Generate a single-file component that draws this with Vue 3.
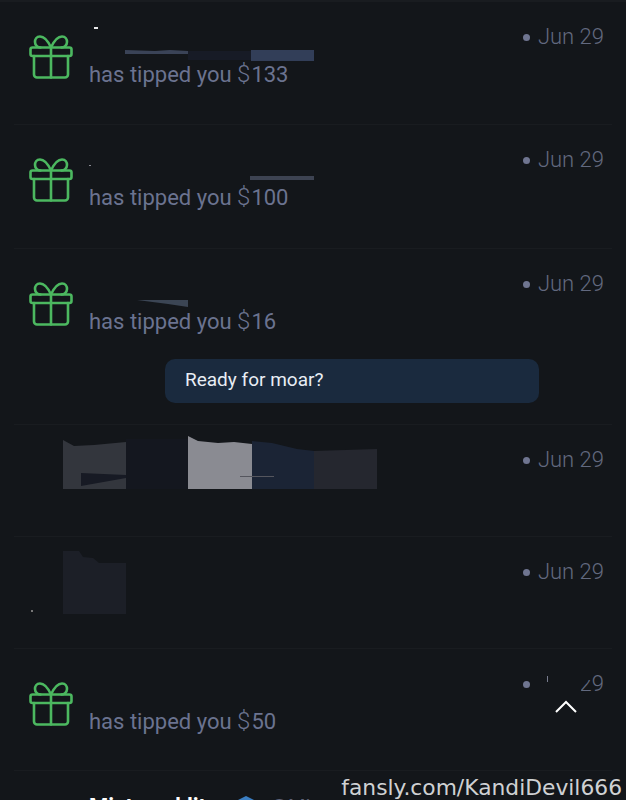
<script setup>
// 通知列表
const rows = [
  { id: 1, amount: '133', height: 123 },
  { id: 2, amount: '100', height: 124 },
  { id: 3, amount: '16', height: 176, reply: 'Ready for moar?' },
  { id: 4, height: 112 },
  { id: 5, height: 112 },
  { id: 6, amount: '50', height: 122 },
]
</script>

<template>
  <div class="page">
    <div class="top-line"></div>
    <div v-for="row in rows" :key="row.id" class="row" :style="{ height: row.height + 'px' }">
      <div class="row-main">
        <div class="icon-col">
          <svg v-if="row.amount" class="gift" viewBox="0 0 44 44" fill="none" stroke="#4cb860" stroke-width="2.6" stroke-linecap="round" stroke-linejoin="round">
            <rect x="1.5" y="12.5" width="41" height="8.5" rx="2" />
            <path d="M5 21v18.500a3 3 0 0 0 3 3h28a3 3 0 0 0 3-3V21" />
            <path d="M22 12.500v30" />
            <path d="M22 12.500C19 6 15 1.500 11 1.500c-3.500 0-5 3-5 5.500 0 3 2.500 5.500 5.500 5.500" />
            <path d="M22 12.500C25 6 29 1.500 33 1.500c3.500 0 5 3 5 5.500 0 3-2.500 5.500-5.500 5.500" />
          </svg>
        </div>
        <div v-if="row.amount" class="tip-text">has tipped you <span class="dollar">$</span>{{ row.amount }}</div>
        <div class="date">
          <span class="dot"></span>
          <span>Jun 29</span>
        </div>
      </div>
      <div v-if="row.reply" class="reply-wrap">
        <div class="reply">{{ row.reply }}</div>
      </div>

      <!-- 打码区域 -->
      <svg v-if="row.id === 1" class="patches" width="400" height="70" viewBox="0 0 400 70">
        <path d="M94 25h4v2h-4z" fill="#e8e8ea" />
        <path d="M125 48l30 1 15-1 18 1v3h-63z" fill="#3a4357" />
        <path d="M188 49h63v9h-63z" fill="#171b26" />
        <path d="M251 48h63v11h-63z" fill="#323e58" />
      </svg>
      <svg v-if="row.id === 2" class="patches" width="400" height="70" viewBox="0 0 400 70">
        <path d="M89 40h2v1h-2z" fill="#8a8a92" />
        <path d="M250 51h64v4h-64z" fill="#3d4352" />
      </svg>
      <svg v-if="row.id === 3" class="patches" width="400" height="70" viewBox="0 0 400 70">
        <path d="M137 51l51 0v7l-20-3z" fill="#3b4554" />
      </svg>
      <svg v-if="row.id === 4" class="patches" width="400" height="80" viewBox="0 0 400 80">
        <path d="M63 15l11 6 20-1 32-3v47H63z" fill="#33363d" />
        <path d="M81 48l45 2v3l-45 8z" fill="#171a24" />
        <path d="M126 14h62v50h-62z" fill="#14171f" />
        <path d="M188 11l10 5 20 2 16-1 18 2v45h-64z" fill="#8a8b92" />
        <path d="M252 16l20 2 25 6 17 2v38h-62z" fill="#1b2435" />
        <path d="M314 26l63-2v40h-63z" fill="#25272f" />
        <path d="M240 51h34v1h-34z" fill="#55565e" />
      </svg>
      <svg v-if="row.id === 5" class="patches" width="400" height="90" viewBox="0 0 400 90">
        <path d="M63 14h16l4 6 10 1 6 5h27v51H63z" fill="#1c1f27" />
        <path d="M31 73h2v2h-2z" fill="#777" />
      </svg>
      <template v-if="row.id === 6">
        <svg class="patches" width="626" height="60" viewBox="0 0 626 60">
          <path d="M533 20h48v28h-48zM581 20h10v11h-10z" fill="#13161a" />
          <path d="M547 27h1v6h-1z" fill="#777b8d" />
        </svg>
        <svg class="scroll-up" width="24" height="18" viewBox="0 0 24 18" fill="none" stroke="#fff" stroke-width="2">
          <path d="M2 15L12 5l10 10" />
        </svg>
      </template>
    </div>

    <div class="row last-row">
      <span class="name">Mistressklit</span>
      <svg class="badge" width="18" height="18" viewBox="0 0 18 18"><path d="M9 0l8 4v8l-8 6-8-6V4z" fill="#3b7fc4" /></svg>
      <span class="handle">@Mist</span>
    </div>

    <div class="watermark">fansly.com/KandiDevil666</div>
  </div>
</template>

<style scoped>
.page {
  position: relative;
  width: 626px;
  height: 800px;
  overflow: hidden;
  background: #13161a;
  font-family: Roboto, "Liberation Sans", sans-serif;
}

.top-line {
  height: 2px;
  background: #191c20;
}

.row {
  position: relative;
  box-sizing: border-box;
  border-bottom: 1px solid #191c20;
  margin: 0 14px;
}

.row-main {
  display: flex;
  align-items: flex-start;
  padding: 33px 8px 0 15px;
  height: 90px;
  box-sizing: border-box;
}

.icon-col {
  width: 60px;
  flex-shrink: 0;
}

.gift {
  display: block;
  width: 44px;
  height: 44px;
}

.tip-text {
  margin-top: 26px;
  font-size: 22px;
  line-height: 26px;
  color: #6b7390;
  white-space: nowrap;
}

.dollar {
  font-size: 24px;
  font-weight: 300;
  letter-spacing: 1px;
}

.date {
  position: absolute;
  right: 8px;
  top: 22px;
  display: flex;
  align-items: center;
  gap: 8px;
  color: #62697f;
  font-size: 22px;
  font-weight: 300;
  line-height: 26px;
}

.dot {
  width: 7px;
  height: 7px;
  border-radius: 50%;
  background: #6f7590;
}

.reply-wrap {
  display: flex;
  justify-content: flex-end;
  padding: 20px 73px 0 0;
}

.reply {
  box-sizing: border-box;
  width: 374px;
  height: 44px;
  padding: 0 20px;
  line-height: 42px;
  border-radius: 10px;
  background: #1a2a3e;
  color: #e8edf4;
  font-size: 19px;
}

/* 打码层盖在内容上 */
.patches {
  position: absolute;
  left: -14px;
  top: 0;
}

.scroll-up {
  position: absolute;
  left: 540px;
  top: 48px;
}

.last-row {
  display: flex;
  align-items: flex-start;
  height: 40px;
  border-bottom: none;
  padding: 23px 0 0 75px;
}

.name {
  width: 148px;
  font-size: 22px;
  line-height: 26px;
  font-weight: 700;
  color: #fff;
  white-space: nowrap;
}

.badge {
  flex-shrink: 0;
  margin-top: 2px;
}

.handle {
  margin-left: 15px;
  font-size: 20px;
  line-height: 26px;
  color: #5d6378;
  white-space: nowrap;
}

.watermark {
  position: absolute;
  right: 4px;
  bottom: -1px;
  font-family: "DejaVu Sans", sans-serif;
  font-size: 21.8px;
  line-height: 26px;
  color: #cfd1d3;
}
</style>
